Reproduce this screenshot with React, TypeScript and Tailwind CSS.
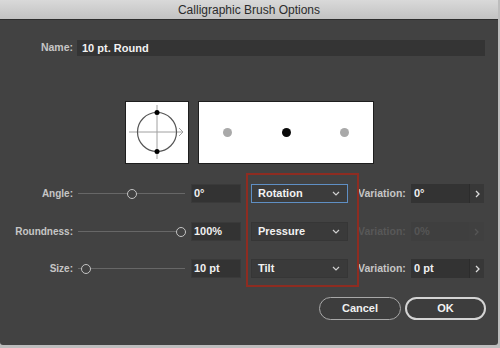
import React from "react";

const font = { fontFamily: '"Liberation Sans", Arial, sans-serif' };

function Chevron({ dim }: { dim?: boolean }) {
  return (
    <svg width="8" height="5" viewBox="0 0 8 5" className="shrink-0">
      <path d="M1 1 L4 4 L7 1" fill="none" stroke={dim ? "#6a6a6a" : "#cfcfcf"} strokeWidth="1.2" />
    </svg>
  );
}

function Right({ dim }: { dim?: boolean }) {
  return (
    <svg width="5" height="8" viewBox="0 0 5 8">
      <path d="M1 1 L4 4 L1 7" fill="none" stroke={dim ? "#555" : "#dcdcdc"} strokeWidth="1.3" />
    </svg>
  );
}

function Slider({ left }: { left: string }) {
  return (
    <div className="relative w-[107px] h-full flex items-center ml-[5px]">
      <div className="w-full h-px bg-[#676767]" />
      <div className={`absolute ${left} top-1/2 -translate-y-1/2 w-[10px] h-[10px] rounded-full border-[1.5px] border-[#c4c4c4] bg-[#424242]`} />
    </div>
  );
}

function Row({
  label,
  thumb,
  value,
  method,
  focused,
  varValue,
  disabled,
}: {
  label: string;
  thumb: string;
  value: string;
  method: string;
  focused?: boolean;
  varValue: string;
  disabled?: boolean;
}) {
  return (
    <div className="flex items-center h-[19px]">
      <div className="w-[73px] text-right text-[10px] font-bold text-[#c6c6c6]">{label}</div>
      <Slider left={thumb} />
      <div className="ml-[6px] w-[50px] h-full bg-[#333333] border border-[#3a3a3a] pl-[2px] flex items-center text-[11px] font-bold text-[#f0f0f0]">
        {value}
      </div>
      <div
        className={`ml-[10px] w-[97px] h-full flex items-center justify-between pl-[6px] pr-[7px] text-[11px] font-bold text-[#f2f2f2] ${
          focused ? "bg-[#3c3c3c] border border-[#5f8fc4]" : "bg-[#3a3a3a] border border-[#363636]"
        }`}
      >
        <span>{method}</span>
        <Chevron />
      </div>
      <div className={`ml-[10px] w-[53px] text-[10.5px] font-bold ${disabled ? "text-[#585858]" : "text-[#c6c6c6]"}`}>Variation:</div>
      <div className="flex h-full">
        <div
          className={`w-[58px] h-full pl-[3px] flex items-center text-[11px] font-bold ${
            disabled ? "bg-[#3f3f3f] text-[#555]" : "bg-[#333333] text-[#f0f0f0]"
          }`}
        >
          {varValue}
        </div>
        <div
          className={`w-[15px] h-full flex items-center justify-center ${
            disabled ? "bg-[#404040]" : "bg-[#383838] border-l border-[#2c2c2c]"
          }`}
        >
          <Right dim={disabled} />
        </div>
      </div>
    </div>
  );
}

export default function App() {
  return (
    <div className="w-[500px] h-[348px] bg-[#bdbdbd] overflow-hidden" style={font}>
      <div className="relative w-[498px] h-[345px] bg-[#424242] rounded-b-[3px] flex flex-col">
        <div className="h-[20px] bg-gradient-to-b from-[#d9d9d9] to-[#c2c2c2] border-b border-[#2d2d2d] flex items-center justify-center text-[12px] text-[#2b2b2b]">
          Calligraphic Brush Options
        </div>

        <div className="mt-[20px] flex items-center h-[16px]">
          <div className="w-[73px] text-right text-[10.5px] font-bold text-[#c6c6c6]">Name:</div>
          <div className="ml-[4px] w-[408px] h-full bg-[#343434] pl-[5px] flex items-center text-[11px] font-bold text-[#f2f2f2]">
            10 pt. Round
          </div>
        </div>

        <div className="mt-[45px] ml-[125px] flex gap-[9px] h-[63px]">
          <div className="w-[64px] h-full bg-white border border-[#1e1e1e]">
            <svg width="62" height="61" viewBox="0 0 62 61">
              <line x1="3" y1="30" x2="57" y2="30" stroke="#a0a0a0" strokeWidth="1" />
              <path d="M53 26 L57 30 L53 34" fill="none" stroke="#a0a0a0" strokeWidth="1" />
              <line x1="31" y1="3" x2="31" y2="57" stroke="#a0a0a0" strokeWidth="1" />
              <circle cx="31" cy="30" r="19.5" fill="none" stroke="#555" strokeWidth="1.2" />
              <circle cx="31" cy="10.5" r="2.5" fill="#000" />
              <circle cx="31" cy="49.5" r="2.5" fill="#000" />
            </svg>
          </div>
          <div className="w-[176px] h-full bg-white border border-[#1e1e1e] flex items-center justify-between px-[24px]">
            <div className="w-[9px] h-[9px] rounded-full bg-[#a9a9a9]" />
            <div className="w-[9px] h-[9px] rounded-full bg-[#0a0a0a]" />
            <div className="w-[9px] h-[9px] rounded-full bg-[#a9a9a9]" />
          </div>
        </div>

        <div className="mt-[20px] flex flex-col">
          <Row label="Angle:" thumb="left-[49px]" value="0°" method="Rotation" focused varValue="0°" />
          <div className="h-[19px]" />
          <Row label="Roundness:" thumb="left-[98px]" value="100%" method="Pressure" varValue="0%" disabled />
          <div className="h-[18px]" />
          <Row label="Size:" thumb="left-[3px]" value="10 pt" method="Tilt" varValue="0 pt" />
        </div>

        <div className="mt-[19px] flex justify-end pr-[12px] gap-[4px]">
          <div className="w-[82px] h-[23px] rounded-full border-[1.5px] border-[#a8a8a8] bg-[#3d3d3d] flex items-center justify-center text-[11px] font-bold text-[#f0f0f0]">
            Cancel
          </div>
          <div className="w-[81px] h-[23px] rounded-full border-2 border-[#d4d4d4] bg-[#3d3d3d] flex items-center justify-center text-[11px] font-bold text-[#f4f4f4]">
            OK
          </div>
        </div>

        <div className="absolute left-[246px] top-[173px] w-[113px] h-[114px] border-[2.5px] border-[#8e2c21] pointer-events-none" />
      </div>
    </div>
  );
}
